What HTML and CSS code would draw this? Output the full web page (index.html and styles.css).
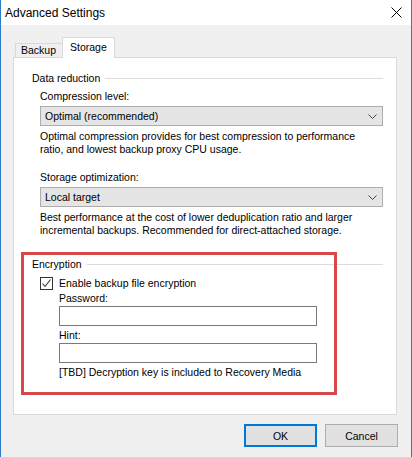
FILE: index.html
```html
<!DOCTYPE html>
<html>
<head>
<meta charset="utf-8">
<link rel="stylesheet" href="styles.css">
</head>
<body>
<div class="window">
  <div class="titlebar">
    <span class="title">Advanced Settings</span>
    <svg class="close" width="11" height="11" viewBox="0 0 11 11"><path d="M0.5 0.5 L10.5 10.5 M10.5 0.5 L0.5 10.5" stroke="#000" stroke-width="1" fill="none"/></svg>
  </div>
  <div class="client">
    <div class="tabs">
      <div class="tab">Backup</div>
      <div class="tab active">Storage</div>
    </div>
    <div class="panel">
      <section class="group">
        <div class="group-head"><span>Data reduction</span><span class="rule"></span></div>
        <div class="group-body">
          <div class="label">Compression level:</div>
          <div class="combo"><span>Optimal (recommended)</span>
            <svg class="chev" width="9" height="5" viewBox="0 0 9 5"><path d="M0.5 0.5 L4.5 4.5 L8.5 0.5" stroke="#404040" stroke-width="1" fill="none"/></svg>
          </div>
          <p class="desc">Optimal compression provides for best compression to performance<br>ratio, and lowest backup proxy CPU usage.</p>
          <div class="label spaced">Storage optimization:</div>
          <div class="combo"><span>Local target</span>
            <svg class="chev" width="9" height="5" viewBox="0 0 9 5"><path d="M0.5 0.5 L4.5 4.5 L8.5 0.5" stroke="#404040" stroke-width="1" fill="none"/></svg>
          </div>
          <p class="desc">Best performance at the cost of lower deduplication ratio and larger<br>incremental backups. Recommended for direct-attached storage.</p>
        </div>
      </section>
      <section class="group enc">
        <div class="group-head"><span>Encryption</span><span class="rule"></span></div>
        <div class="group-body">
          <div class="check-row">
            <span class="checkbox"><svg width="11" height="11" viewBox="0 0 11 11"><path d="M1.5 5.5 L4 8.5 L9.5 1.5" stroke="#333" stroke-width="1.1" fill="none"/></svg></span>
            <span>Enable backup file encryption</span>
          </div>
          <div class="sub">
            <div class="field-label">Password:</div>
            <div class="textbox"></div>
            <div class="field-label">Hint:</div>
            <div class="textbox"></div>
            <div class="field-label note">[TBD] Decryption key is included to Recovery Media</div>
          </div>
        </div>
      </section>
    </div>
    <div class="buttons">
      <div class="btn default">OK</div>
      <div class="btn">Cancel</div>
    </div>
  </div>
  <div class="highlight"></div>
</div>
</body>
</html>
```

FILE: styles.css
```css
html, body {
  margin: 0;
  padding: 0;
  background: #f0f0f0;
}
body {
  font-family: "Liberation Sans", Arial, sans-serif;
  font-size: 10.5px;
  color: #000;
}
.window {
  position: relative;
  width: 412px;
  height: 457px;
  box-sizing: border-box;
  border-left: 1px solid #2b7bc6;
  border-right: 1px solid #2b7bc6;
  background: #f0f0f0;
  overflow: hidden;
}
.titlebar {
  height: 25px;
  background: #fff;
  display: flex;
  align-items: center;
  justify-content: space-between;
  padding: 0 9px 0 4px;
}
.title {
  font-size: 12px;
  line-height: 16px;
}
.close {
  display: block;
}
.client {
  padding: 12px 14px 0 12px;
}
.tabs {
  display: flex;
  align-items: flex-end;
  height: 20px;
  padding-left: 2px;
}
.tab {
  box-sizing: border-box;
  height: 14px;
  border: 1px solid #d9d9d9;
  border-bottom: none;
  background: #f0f0f0;
  padding: 0 6px 0 5px;
  line-height: 13px;
  width: 48px;
  white-space: nowrap;
}
.tab.active {
  position: relative;
  z-index: 1;
  height: 21px;
  margin-bottom: -1px;
  margin-left: -1px;
  width: 53px;
  background: #fff;
  padding: 0 0 0 7px;
  line-height: 18px;
}
.panel {
  box-sizing: border-box;
  height: 358px;
  border: 1px solid #d9d9d9;
  background: #fff;
  padding: 12px 13px 0 18px;
}
.group-head {
  display: flex;
  align-items: center;
  line-height: 16px;
  white-space: nowrap;
}
.rule {
  flex: 1;
  height: 1px;
  background: #dcdcdc;
  margin-left: 5px;
}
.group-body {
  padding-left: 8px;
}
.label {
  line-height: 16px;
  margin-top: 2px;
}
.label.spaced {
  margin-top: 13px;
}
.combo {
  box-sizing: border-box;
  height: 20px;
  margin-top: 2px;
  border: 1px solid #adadad;
  background: #e5e5e5;
  display: flex;
  align-items: center;
  justify-content: space-between;
  padding: 0 5px 0 4px;
}
.chev {
  display: block;
}
.desc {
  margin: 4px 0 0;
  line-height: 13px;
  white-space: nowrap;
}
.enc {
  margin-top: 19px;
}
.check-row {
  display: flex;
  align-items: center;
  height: 16px;
  margin-top: 3px;
  white-space: nowrap;
}
.checkbox {
  box-sizing: border-box;
  width: 13px;
  height: 13px;
  border: 1px solid #333;
  background: #fff;
  margin-right: 6px;
  display: flex;
  align-items: center;
  justify-content: center;
}
.checkbox svg {
  display: block;
}
.sub {
  padding-left: 19px;
  width: 258px;
}
.field-label {
  line-height: 14px;
}
.textbox {
  box-sizing: border-box;
  height: 20px;
  margin: 1px 0 2px;
  border: 1px solid #7a7a7a;
  background: #fff;
}
.note {
  margin-top: 2px;
  white-space: nowrap;
}
.buttons {
  display: flex;
  justify-content: flex-end;
  gap: 8px;
  margin-top: 9px;
  margin-right: -1px;
}
.btn {
  box-sizing: border-box;
  width: 73px;
  height: 23px;
  border: 1px solid #adadad;
  background: #e1e1e1;
  display: flex;
  align-items: center;
  justify-content: center;
}
.btn.default {
  border: 2px solid #0078d7;
}
.highlight {
  position: absolute;
  left: 20px;
  top: 252px;
  width: 316px;
  height: 143px;
  box-sizing: border-box;
  border: 3px solid #d8474a;
  pointer-events: none;
}
```
